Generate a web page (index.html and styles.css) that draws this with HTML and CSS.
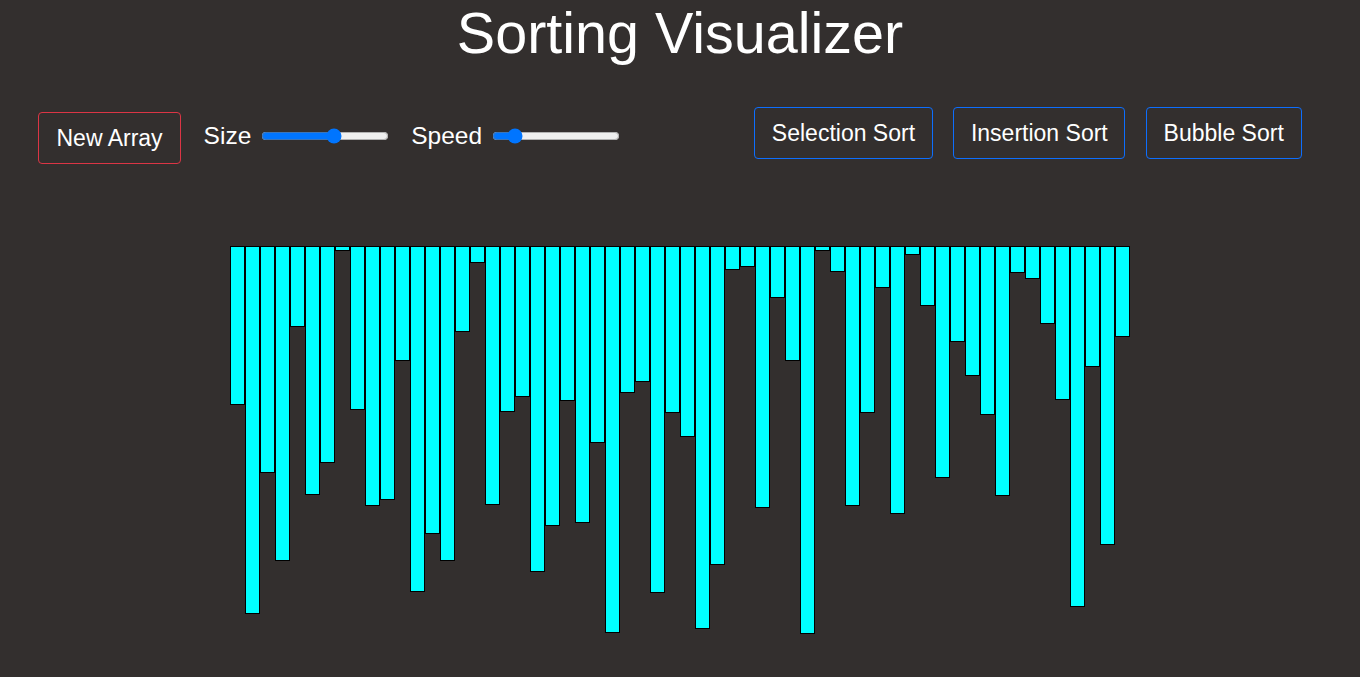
FILE: index.html
```html
<!DOCTYPE html>
<html lang="en">
<head>
<meta charset="utf-8">
<title>Sorting Visualizer</title>
<link rel="stylesheet" href="styles.css">
</head>
<body>
<header class="top">
  <h1 class="title">Sorting Visualizer</h1>
  <div class="controls">
    <div class="left-group">
      <button class="btn btn-red">New Array</button>
      <div class="ctrl">
        <label class="ctrl-label" for="size">Size</label>
        <input class="range" id="size" type="range" min="0" max="100" value="58">
      </div>
      <div class="ctrl">
        <label class="ctrl-label" for="speed">Speed</label>
        <input class="range" id="speed" type="range" min="0" max="100" value="14">
      </div>
    </div>
    <div class="right-group">
      <button class="btn btn-blue">Selection Sort</button>
      <button class="btn btn-blue">Insertion Sort</button>
      <button class="btn btn-blue">Bubble Sort</button>
    </div>
  </div>
</header>
<main class="bars">
  <div class="bar" style="height:159px"></div>
  <div class="bar" style="height:368px"></div>
  <div class="bar" style="height:227px"></div>
  <div class="bar" style="height:315px"></div>
  <div class="bar" style="height:81px"></div>
  <div class="bar" style="height:249px"></div>
  <div class="bar" style="height:217px"></div>
  <div class="bar" style="height:5px"></div>
  <div class="bar" style="height:164px"></div>
  <div class="bar" style="height:260px"></div>
  <div class="bar" style="height:254px"></div>
  <div class="bar" style="height:115px"></div>
  <div class="bar" style="height:346px"></div>
  <div class="bar" style="height:288px"></div>
  <div class="bar" style="height:315px"></div>
  <div class="bar" style="height:86px"></div>
  <div class="bar" style="height:17px"></div>
  <div class="bar" style="height:259px"></div>
  <div class="bar" style="height:166px"></div>
  <div class="bar" style="height:151px"></div>
  <div class="bar" style="height:326px"></div>
  <div class="bar" style="height:280px"></div>
  <div class="bar" style="height:155px"></div>
  <div class="bar" style="height:277px"></div>
  <div class="bar" style="height:197px"></div>
  <div class="bar" style="height:387px"></div>
  <div class="bar" style="height:147px"></div>
  <div class="bar" style="height:136px"></div>
  <div class="bar" style="height:347px"></div>
  <div class="bar" style="height:167px"></div>
  <div class="bar" style="height:191px"></div>
  <div class="bar" style="height:383px"></div>
  <div class="bar" style="height:319px"></div>
  <div class="bar" style="height:24px"></div>
  <div class="bar" style="height:21px"></div>
  <div class="bar" style="height:262px"></div>
  <div class="bar" style="height:52px"></div>
  <div class="bar" style="height:115px"></div>
  <div class="bar" style="height:388px"></div>
  <div class="bar" style="height:5px"></div>
  <div class="bar" style="height:26px"></div>
  <div class="bar" style="height:260px"></div>
  <div class="bar" style="height:167px"></div>
  <div class="bar" style="height:42px"></div>
  <div class="bar" style="height:268px"></div>
  <div class="bar" style="height:9px"></div>
  <div class="bar" style="height:60px"></div>
  <div class="bar" style="height:232px"></div>
  <div class="bar" style="height:96px"></div>
  <div class="bar" style="height:130px"></div>
  <div class="bar" style="height:169px"></div>
  <div class="bar" style="height:250px"></div>
  <div class="bar" style="height:27px"></div>
  <div class="bar" style="height:33px"></div>
  <div class="bar" style="height:78px"></div>
  <div class="bar" style="height:154px"></div>
  <div class="bar" style="height:361px"></div>
  <div class="bar" style="height:121px"></div>
  <div class="bar" style="height:299px"></div>
  <div class="bar" style="height:91px"></div>
</main>
</body>
</html>
```
FILE: styles.css
```css
* {
  box-sizing: border-box;
}

html, body {
  margin: 0;
  padding: 0;
}

body {
  background: #332f2e;
  color: #ffffff;
  font-family: "Liberation Sans", Arial, sans-serif;
  width: 1360px;
  height: 677px;
  overflow: hidden;
}

.title {
  margin: -1px 0 0;
  font-size: 57.5px;
  line-height: 1.2;
  font-weight: normal;
  text-align: center;
}

.controls {
  display: flex;
  justify-content: space-between;
  align-items: flex-start;
  margin-top: 38.5px;
  padding: 0 58.5px 0 38px;
}

.left-group {
  display: flex;
  align-items: center;
  gap: 22.5px;
  margin-top: 5.6px;
}

.right-group {
  display: flex;
  align-items: center;
  gap: 20.5px;
}

.btn {
  font-family: "Liberation Sans", Arial, sans-serif;
  font-size: 23px;
  line-height: 34px;
  padding: 8px 16.7px;
  background: transparent;
  color: #ffffff;
  border: 1px solid;
  border-radius: 4px;
  cursor: pointer;
}

.btn-red {
  border-color: #dc3545;
  padding-left: 17.5px;
  padding-right: 17.5px;
}

.btn-blue {
  border-color: #0d6efd;
}

.ctrl {
  display: flex;
  align-items: center;
  gap: 9.5px;
  margin-bottom: 5px;
}

.ctrl-label {
  font-size: 24.5px;
  line-height: 28px;
}

.range {
  width: 128px;
  margin: 0;
}

.bars {
  display: flex;
  justify-content: center;
  align-items: flex-start;
  margin-top: 81.7px;
}

.bar {
  width: 15px;
  background: #00ffff;
  border: 1px solid #000000;
}
```
